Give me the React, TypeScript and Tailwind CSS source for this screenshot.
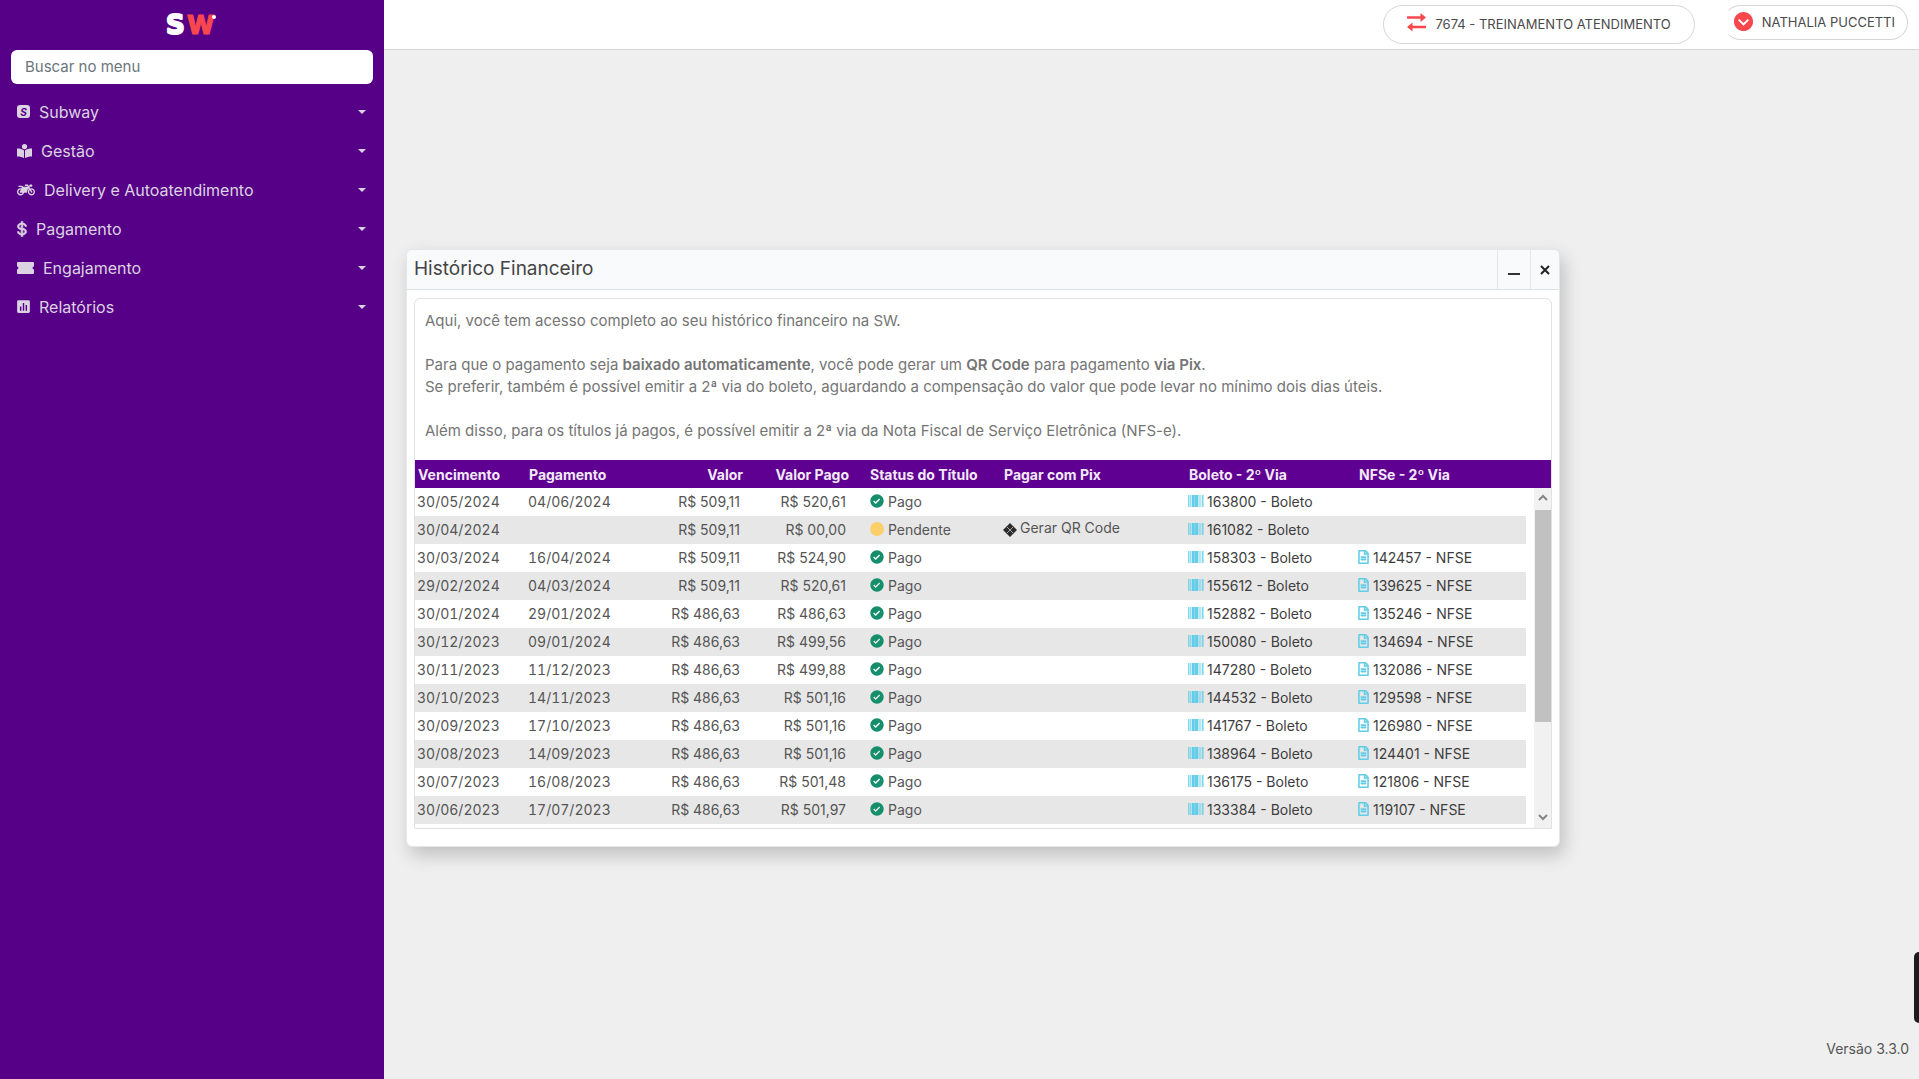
import type { ReactNode } from "react";
import { BiDollar, BiSolidBarChartSquare, BiSolidCheckCircle, BiSolidChevronDownCircle } from "react-icons/bi";
import { FaMotorcycle, FaRegFileAlt } from "react-icons/fa";

function ReaderIcon() {
  return (
    <svg viewBox="0 0 15 14" className="h-[14px] w-[15px]" fill="currentColor" aria-hidden>
      <circle cx="7.5" cy="2.6" r="2.6" />
      <path d="M0 4.6c3 0 5.3.6 7 1.8V14c-1.6-1.1-4-1.6-7-1.6zM15 4.6c-3 0-5.3.6-7 1.8V14c1.6-1.1 4-1.6 7-1.6z" />
    </svg>
  );
}

function TicketIcon() {
  return (
    <svg viewBox="0 0 17 12" className="h-3 w-[17px]" fill="currentColor" aria-hidden>
      <path d="M1 0h15a1 1 0 0 1 1 1v3.6a1.4 1.4 0 0 0 0 2.8V11a1 1 0 0 1-1 1H1a1 1 0 0 1-1-1V7.4a1.4 1.4 0 0 0 0-2.8V1a1 1 0 0 1 1-1z" />
    </svg>
  );
}

function BarcodeIcon() {
  return (
    <svg viewBox="0 0 16 12" className="h-3 w-4" fill="#62cde8" aria-hidden>
      <path d="M0 0h1.5v12H0zM2.2 0h1v12h-1z" opacity="0.8" />
      <path d="M3.8 0h3v12h-3zM7.1 0h3v12h-3z" />
      <path d="M10.6 0h1v12h-1zM12.4 0h.9v12h-.9zM14 0h1.6v12H14z" opacity="0.8" />
    </svg>
  );
}

function TransferIcon() {
  return (
    <svg viewBox="0 0 19 19" className="mb-1 size-[19px]" aria-hidden>
      <path d="M1 4.5h14M18 14H4" stroke="#f8484e" strokeWidth="2.6" strokeLinecap="round" />
      <path d="M13.5 0L19 4.5 13.5 9zM5.5 9.5L0 14l5.5 4.5z" fill="#f8484e" />
    </svg>
  );
}

function PixIcon() {
  return (
    <svg viewBox="0 0 14 14" className="mt-[5px] size-[14px]" aria-hidden>
      <path d="M7 0l7 7-7 7-7-7z" fill="#2d2d2d" />
      <path d="M4 4l6 6M10 4l-6 6" stroke="#a5a5a5" strokeWidth="1" fill="none" />
    </svg>
  );
}

function Logo() {
  return (
    <svg viewBox="0 0 54 40" className="h-10 w-[54px]" strokeLinejoin="round" role="img" aria-label="SW">
      <text x="1" y="29" className="font-['DejaVu_Sans',sans-serif] text-[26px] font-bold" fill="#fff" stroke="#fff" strokeWidth="2">
        S
      </text>
      <text x="22" y="29" className="text-[26px] font-extrabold" fill="#f8484e" stroke="#f8484e" strokeWidth="1">
        W
      </text>
      <circle cx="49" cy="12" r="2" fill="#fff" />
    </svg>
  );
}

const menu: { label: string; icon: ReactNode }[] = [
  {
    label: "Subway",
    icon: (
      <span className="flex size-[13px] items-center justify-center rounded-[3px] bg-[#dcd3e2] text-[10px] font-bold italic leading-none text-[#560087]">
        S
      </span>
    )
  },
  { label: "Gestão", icon: <ReaderIcon /> },
  { label: "Delivery e Autoatendimento", icon: <FaMotorcycle className="size-[18px]" /> },
  { label: "Pagamento", icon: <BiDollar className="-mx-1 size-[18px]" strokeWidth={1} /> },
  { label: "Engajamento", icon: <TicketIcon /> },
  { label: "Relatórios", icon: <BiSolidBarChartSquare className="-mx-0.5 size-[17px]" /> }
];

const titles = [
  { due: "30/05/2024", paid: "04/06/2024", value: "509,11", paidValue: "520,61", boleto: "163800", nfse: "" },
  { due: "30/04/2024", paid: "", value: "509,11", paidValue: "00,00", boleto: "161082", nfse: "" },
  { due: "30/03/2024", paid: "16/04/2024", value: "509,11", paidValue: "524,90", boleto: "158303", nfse: "142457" },
  { due: "29/02/2024", paid: "04/03/2024", value: "509,11", paidValue: "520,61", boleto: "155612", nfse: "139625" },
  { due: "30/01/2024", paid: "29/01/2024", value: "486,63", paidValue: "486,63", boleto: "152882", nfse: "135246" },
  { due: "30/12/2023", paid: "09/01/2024", value: "486,63", paidValue: "499,56", boleto: "150080", nfse: "134694" },
  { due: "30/11/2023", paid: "11/12/2023", value: "486,63", paidValue: "499,88", boleto: "147280", nfse: "132086" },
  { due: "30/10/2023", paid: "14/11/2023", value: "486,63", paidValue: "501,16", boleto: "144532", nfse: "129598" },
  { due: "30/09/2023", paid: "17/10/2023", value: "486,63", paidValue: "501,16", boleto: "141767", nfse: "126980" },
  { due: "30/08/2023", paid: "14/09/2023", value: "486,63", paidValue: "501,16", boleto: "138964", nfse: "124401" },
  { due: "30/07/2023", paid: "16/08/2023", value: "486,63", paidValue: "501,48", boleto: "136175", nfse: "121806" },
  { due: "30/06/2023", paid: "17/07/2023", value: "486,63", paidValue: "501,97", boleto: "133384", nfse: "119107" }
];

function Sidebar() {
  return (
    <aside className="flex w-96 shrink-0 flex-col bg-[#560087]">
      <div className="flex h-[50px] items-center justify-center">
        <Logo />
      </div>
      <div className="px-[11px]">
        <input
          type="text"
          aria-label="Buscar no menu"
          placeholder="Buscar no menu"
          className="h-[34px] w-full rounded-md bg-white px-[14px] pb-0.5 text-[15px] text-gray-700 placeholder:text-[#6c757d]"
        />
      </div>
      <nav className="mt-2">
        {menu.map((item) => (
          <button
            key={item.label}
            type="button"
            className="flex h-[39px] w-full items-center px-[17px] text-left text-[16px] text-[#dcd3e2]"
          >
            {item.icon}
            <span className="ml-[9px] flex-1">{item.label}</span>
            <svg viewBox="0 0 8 4" className="mr-px h-1 w-2" aria-hidden>
              <path d="M0 0h8L4 4z" fill="currentColor" />
            </svg>
          </button>
        ))}
      </nav>
    </aside>
  );
}

function Topbar() {
  return (
    <header className="flex h-[50px] items-start justify-end gap-7 border-b border-[#d6d6d6] bg-white pr-[11px] pt-[5px] text-[13px] text-[#4a4a4a]">
      <button type="button" className="flex h-[39px] items-center gap-[9px] rounded-full border border-[#d6d6d6] px-[23px]">
        <TransferIcon />
        7674 - TREINAMENTO ATENDIMENTO
      </button>
      <button type="button" className="flex h-[35px] items-center gap-[7px] rounded-full border border-[#d6d6d6] border-l-transparent pl-2 pr-3">
        <BiSolidChevronDownCircle className="mb-[3px] size-[23px] text-[#f8484e]" />
        NATHALIA PUCCETTI
      </button>
    </header>
  );
}

function Scrollbar() {
  return (
    <div className="absolute bottom-0 right-0 top-7 flex w-[17px] flex-col items-center bg-[#f1f1f1]" aria-hidden>
      <svg viewBox="0 0 17 22" className="h-[22px] w-[17px]">
        <path d="M5 12l4-4 4 4" fill="none" stroke="#858585" strokeWidth="2" />
      </svg>
      <div className="h-[212px] w-4 bg-[#c1c1c1]" />
      <svg viewBox="0 0 17 22" className="mt-auto h-[22px] w-[17px]">
        <path d="M5 9l4 4 4-4" fill="none" stroke="#858585" strokeWidth="2" />
      </svg>
    </div>
  );
}

function TitlesTable() {
  return (
    <div className="relative pb-1">
      <table className="w-full table-fixed text-left text-[14px] text-[#555]">
        <colgroup>
          <col className="w-[111px]" />
          <col className="w-[120px]" />
          <col className="w-[97px]" />
          <col className="w-[106px]" />
          <col className="w-[152px]" />
          <col className="w-[185px]" />
          <col className="w-[170px]" />
          <col />
          <col className="w-[25px]" />
        </colgroup>
        <thead>
          <tr className="h-7 bg-[#5f0092] text-[#f3e9f8]">
            <th className="pl-[3px]">Vencimento</th>
            <th className="pl-[3px]">Pagamento</th>
            <th className="text-right">Valor</th>
            <th className="text-right">Valor Pago</th>
            <th className="pl-[21px]">Status do Título</th>
            <th className="pl-[3px]">Pagar com Pix</th>
            <th className="pl-[3px]">Boleto - 2º Via</th>
            <th className="pl-[3px]">NFSe - 2º Via</th>
            <th aria-label="Rolagem" />
          </tr>
        </thead>
        <tbody>
          {titles.map((title, index) => {
            const shade = index % 2 ? "bg-[#e7e7e7]" : "";
            return (
              <tr key={title.due} className="h-7">
                <td className={`pb-0.5 pl-0.5 tabular-nums ${shade}`}>{title.due}</td>
                <td className={`pb-0.5 pl-0.5 tabular-nums ${shade}`}>{title.paid}</td>
                <td className={`pb-0.5 pr-[3px] text-right ${shade}`}>R$ {title.value}</td>
                <td className={`pb-0.5 pr-[3px] text-right ${shade}`}>R$ {title.paidValue}</td>
                <td className={`pb-0.5 pl-5 ${shade}`}>
                  <span className="flex items-center gap-[3px]">
                    {title.paid ? (
                      <BiSolidCheckCircle className="size-4 text-[#158f6b]" />
                    ) : (
                      <span className="mx-px size-[14px] rounded-full bg-[#fbd06b]" />
                    )}
                    {title.paid ? "Pago" : "Pendente"}
                  </span>
                </td>
                <td className={`pb-0.5 pl-0.5 ${shade}`}>
                  {!title.paid && (
                    <button type="button" className="flex items-center gap-[3px] pb-1">
                      <PixIcon />
                      Gerar QR Code
                    </button>
                  )}
                </td>
                <td className={`pb-0.5 pl-0.5 text-[#3d3d3d] ${shade}`}>
                  <a href="#boleto" className="flex items-center gap-[3px]">
                    <BarcodeIcon />
                    {title.boleto} - Boleto
                  </a>
                </td>
                <td className={`pb-0.5 pl-0.5 text-[#3d3d3d] ${shade}`}>
                  {title.nfse && (
                    <a href="#nfse" className="flex items-center gap-1">
                      <FaRegFileAlt className="h-[14px] w-[11px] text-[#62cde8]" stroke="currentColor" strokeWidth={16} />
                      {title.nfse} - NFSE
                    </a>
                  )}
                </td>
                <td />
              </tr>
            );
          })}
        </tbody>
      </table>
      <Scrollbar />
    </div>
  );
}

function HistoryWindow() {
  return (
    <section className="ml-[22px] mr-[359px] mt-[199px] rounded-md border border-[#e4e6e8] bg-white shadow-[4px_8px_18px_rgba(0,0,0,0.2)]">
      <div className="flex h-10 items-stretch rounded-t-md border-b border-[#dee2e6] bg-[#f8fafb]">
        <h1 className="flex-1 self-center pl-[7px] text-[19px] text-[#444]">Histórico Financeiro</h1>
        <button type="button" aria-label="Minimizar" className="flex w-[33px] items-center justify-center border-l border-[#e4e6e8]">
          <span className="mt-2 h-0.5 w-3 bg-[#333]" />
        </button>
        <button type="button" aria-label="Fechar" className="flex w-[29px] items-center justify-center border-l border-[#e4e6e8]">
          <svg viewBox="0 0 10 10" className="size-[10px]" aria-hidden>
            <path d="M1 1l8 8M9 1L1 9" stroke="#222" strokeWidth="2" />
          </svg>
        </button>
      </div>
      <div className="px-[7px] pb-[17px] pt-2">
        <div className="rounded-t-md border border-[#e0e2e4]">
          <div className="px-[10px] pb-[18px] pt-[11px] text-[15px] leading-[22px] text-[#757575]">
            <p>Aqui, você tem acesso completo ao seu histórico financeiro na SW.</p>
            <p className="mt-[22px]">
              Para que o pagamento seja <strong className="font-semibold">baixado automaticamente</strong>, você pode gerar um{" "}
              <strong className="font-semibold">QR Code</strong> para pagamento <strong className="font-semibold">via Pix</strong>.
            </p>
            <p>
              Se preferir, também é possível emitir a 2ª via do boleto, aguardando a compensação do valor que pode levar no
              mínimo dois dias úteis.
            </p>
            <p className="mt-[22px]">
              Além disso, para os títulos já pagos, é possível emitir a 2ª via da Nota Fiscal de Serviço Eletrônica (NFS-e).
            </p>
          </div>
          <TitlesTable />
        </div>
      </div>
    </section>
  );
}

export default function App() {
  return (
    <div className="flex min-h-screen bg-[#efefef] font-['Inter',sans-serif]">
      <Sidebar />
      <div className="relative flex min-w-0 flex-1 flex-col">
        <Topbar />
        <main className="flex-1">
          <HistoryWindow />
        </main>
        <footer className="px-[10px] pb-5 text-right text-[14px] leading-5 text-[#555]">Versão 3.3.0</footer>
        <div className="absolute bottom-14 right-0 h-[71px] w-[5px] rounded-l-md bg-[#1c1c1c]" />
      </div>
    </div>
  );
}
